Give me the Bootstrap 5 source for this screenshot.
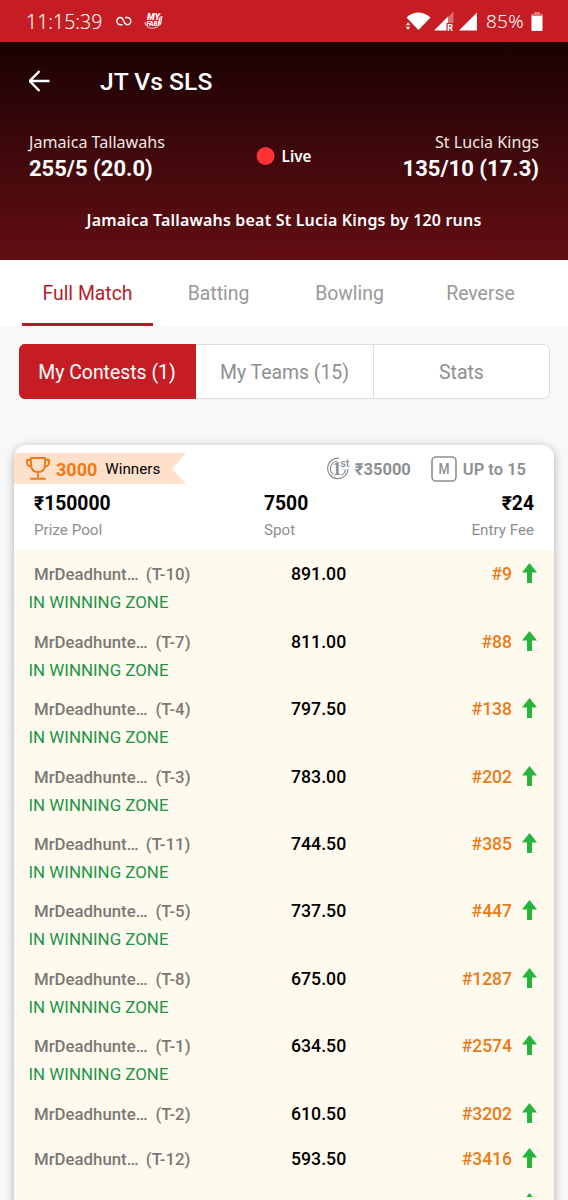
<!DOCTYPE html>
<html lang="en">
<head>
<meta charset="utf-8">
<meta name="viewport" content="width=device-width, initial-scale=1">
<title>JT Vs SLS</title>
<link href="https://cdn.jsdelivr.net/npm/bootstrap@5.3.0/dist/css/bootstrap.min.css" rel="stylesheet">
<style>
body{font-family:Roboto,"Liberation Sans",sans-serif;background:#f8f8f8;height:1200px;overflow:hidden;color:#000}
svg{display:block;flex:none}
.slate{font-family:"Noto Sans","Open Sans",sans-serif}
.statusbar{height:42px;background:#c61d25;padding:0 25px 0 26px}
.clock{font-size:19.500px;font-weight:350;width:78px;white-space:nowrap;padding-top:1px}
.pct{font-size:19px;font-weight:350;margin-left:9px;letter-spacing:.3px;padding-top:1px}
.hero{height:218px;background:linear-gradient(#1a0203,#630e13);color:#fff;padding:0 29px}
.titlebar{height:78px}
.titlebar h1{font-size:24.700px;font-weight:500;margin:0 0 0 49px;line-height:1;padding-top:3px}
.team{font-size:16.100px;line-height:22px;color:#f3e6e6}
.runs{font-size:22px;font-weight:700;line-height:31px}
.scores{height:76px;padding-top:11px}
.live{top:145px;font-size:15.200px}
.live-dot{width:18px;height:18px;background:#ff3236}
.result{font-size:16px;letter-spacing:.18px;font-weight:600;line-height:24px;padding-top:12px}
.match-tabs{height:66px;background:#fff;padding:0 22px}
.match-tabs .nav-link{width:131px;height:66px;border-radius:0;color:#999;font-size:19.400px;padding:0;line-height:67px}
.match-tabs .nav-link.active{color:#b51c29;box-shadow:inset 0 -3px #b51c29}
.segments{margin:18px 18px 0 19px;height:55px;border-radius:6px;background:#fff;overflow:hidden}
.segments button{width:178px;border:1px solid #ddd;border-left:0;background:none;color:#8c8f92;font-size:19.400px;padding:2px 0 0}
.segments button:last-child{width:176px;border-radius:0 6px 6px 0}
.segments .current{width:177px;background:#c61d25;color:#fff;border-color:#c61d25}
.contest{margin:46px 14px 0;height:760px;border:0;border-radius:12px 12px 0 0;background:#fff;box-shadow:0 2px 10px rgba(0,0,0,.3)}
.contest-top{padding-top:8px;height:39px}
.ribbon{width:172px;height:31px;background:#ffe0cb;clip-path:polygon(0 0,100% 0,92% 50%,100% 100%,0 100%);padding-left:12px;line-height:31px}
.won{color:#f4780f;font-size:18px;font-weight:700;margin-left:6px;padding-top:1px}
.winners{font-size:15.200px;margin-left:8px;padding-top:1px}
.perk{color:#8c8f92;font-weight:700;font-size:16.500px;margin-right:28px}
.perk span{padding-top:3px}
.perk .upto{font-weight:600}
.figures{height:66px;padding:0 20px}
.amount{font-size:19.300px;font-weight:700;line-height:24px;padding-top:7.500px}
.caption-text{font-size:15.200px;line-height:24px;color:#8c8f92;padding-top:2px}
.entries{background:#fffaee;height:647px;overflow:hidden}
.entry{height:67.4px;padding:11.400px 17px 0 14.500px}
.entry.short{height:45px}
.line{height:26px;line-height:26px}
.player{width:162px;padding-left:5.500px;color:#7b7874;font-size:16.800px;font-weight:500;white-space:nowrap}
.points{font-size:17.700px;font-weight:500;width:58px;margin-left:100.500px;white-space:nowrap}
.rank{font-size:17.500px;font-weight:500;color:#ea7a18;margin-left:auto;margin-right:10px}
.zone{font-size:16.900px;line-height:30px;color:#209447}
.entry svg{margin-top:-2px}
.tail{height:3px;background:#fffaee}
</style>
</head>
<body>
<header class="statusbar d-flex align-items-center text-white slate">
  <span class="clock">11:15:39</span>
  <svg style="margin-left:12px" width="16" height="12" viewBox="0 0 16 12" fill="none" stroke="#fff" stroke-width="1.4"><path d="M6.500 9.700H4.400a3.600 3.600 0 0 1 0-7.200C8.800 2.500 6.700 9.700 11.200 9.700a3.600 3.600 0 0 0 0-7.200H9"/></svg>
  <svg style="margin-left:12px" width="20" height="18" viewBox="0 0 20 18" fill="#fff" font-family="Roboto" font-style="italic" font-weight="900"><text x="3" y="8" font-size="9" textLength="13" lengthAdjust="spacingAndGlyphs">MY</text><text x="2.500" y="14.300" font-size="7" textLength="11" lengthAdjust="spacingAndGlyphs">FAB</text><path d="M15 6l-1.500 8h1.800L17 4zM17.500 4h1l-1.300 8-1.500 1.500z"/><path d="M1 10c0 6 8 8 13 4.500" fill="none" stroke="#fff" stroke-width=".8"/></svg>
  <div class="ms-auto d-flex align-items-center">
    <svg width="26" height="20" viewBox="0 0 26 20" fill="#fff"><path d="M1.500 6.500Q13-3.500 25.500 6.500L13.500 19Z"/><path d="M.5 14.300l2.500-3.300 2.500 3.300zM.5 15.700L3 19l2.500-3.300z" stroke="#c61d25" stroke-width=".4"/></svg>
    <svg style="margin-left:3px" width="20" height="20" viewBox="0 0 20 20"><path d="M14 6l5.500-5.500V12H14z" fill="#fff" opacity=".35"/><path d="M0 19.500L14 5.500V12h-1.500v7.500z" fill="#fff"/><text x="13.200" y="19.500" font-family="Roboto" font-weight="700" font-size="9" fill="#fff">R</text></svg>
    <svg style="margin-left:5px" width="18" height="19" viewBox="0 0 18 19" fill="#fff"><path d="M0 18.500L18 .5v18z"/></svg>
    <span class="pct">85%</span>
    <svg style="margin-left:7px" width="12" height="19" viewBox="0 0 12 19" fill="#fff"><path d="M3 0h6v2h3v2H0V2h3z" opacity=".4"/><path d="M.5 4h11v14a1 1 0 0 1-1 1h-9a1 1 0 0 1-1-1z"/></svg>
  </div>
</header>

<section class="hero">
  <div class="titlebar d-flex align-items-center">
    <svg width="22" height="22" viewBox="0 0 22 22" fill="none" stroke="#fff" stroke-width="2.400"><path d="M10.500 1L.8 11l9.700 10M.8 11H20.500"/></svg>
    <h1>JT Vs SLS</h1>
  </div>
  <div class="scores d-flex justify-content-between">
    <div><div class="team slate">Jamaica Tallawahs</div><div class="runs">255/5 (20.0)</div></div>
    <div class="text-end"><div class="team slate">St Lucia Kings</div><div class="runs">135/10 (17.3)</div></div>
    <div class="live position-absolute start-50 translate-middle-x d-flex align-items-center slate"><i class="live-dot rounded-circle"></i><span class="fw-semibold" style="margin-left:7px">Live</span></div>
  </div>
  <div class="result slate text-center">Jamaica Tallawahs beat St Lucia Kings by 120 runs</div>
</section>

<nav class="match-tabs nav flex-nowrap text-center">
  <a class="nav-link active" href="#">Full Match</a>
  <a class="nav-link" href="#">Batting</a>
  <a class="nav-link" href="#">Bowling</a>
  <a class="nav-link" href="#">Reverse</a>
</nav>

<div class="segments d-flex">
  <button class="current">My Contests (1)</button>
  <button>My Teams (15)</button>
  <button>Stats</button>
</div>

<main class="contest card">
  <div class="contest-top d-flex align-items-center">
    <div class="ribbon d-flex align-items-center">
      <svg width="24" height="23" viewBox="0 0 24 23" fill="none" stroke="#f07a1a" stroke-width="1.900" stroke-linecap="round" stroke-linejoin="round"><path d="M5 1h14v6.500c0 5-3 7.500-7 7.500s-7-2.500-7-7.500zM5 3H1v2.500C1 8 3 9.500 5.500 9.500M19 3h4v2.500C23 8 21 9.500 18.500 9.500M12 15v6.500M5 21.800h14"/></svg>
      <span class="won">3000</span><span class="winners">Winners</span>
    </div>
    <div class="perk d-flex align-items-center ms-auto">
      <svg width="23" height="23" viewBox="0 0 23 23" fill="none" stroke="#8c8f92" stroke-width="1.200"><path d="M12 1.300A10.200 10.200 0 1 0 21 12M10 4A7.800 7.800 0 0 0 6 17.500M14.500 18.300A7.800 7.800 0 0 0 18.500 12.500"/><text x="5.500" y="17.500" font-family="Liberation Serif" font-weight="700" font-size="18" fill="#8c8f92" stroke="none">1</text><text x="13.200" y="9.500" font-family="Roboto" font-weight="500" font-size="11" fill="#8c8f92" stroke="none">st</text></svg>
      <span class="first-prize" style="margin-left:5px">₹35000</span>
      <svg style="margin-left:20px" width="26" height="26" viewBox="0 0 26 26"><rect x="1" y="1" width="24" height="24" rx="4" fill="none" stroke="#8c8f92" stroke-width="1.600"/><text x="13" y="18.200" text-anchor="middle" font-family="Roboto" font-weight="500" font-size="14.500" textLength="11" lengthAdjust="spacingAndGlyphs" fill="#8c8f92">M</text></svg>
      <span class="upto" style="margin-left:6px">UP to 15</span>
    </div>
  </div>
  <div class="figures d-flex">
    <div style="width:230px"><div class="amount">₹150000</div><div class="caption-text">Prize Pool</div></div>
    <div><div class="amount">7500</div><div class="caption-text">Spot</div></div>
    <div class="ms-auto text-end"><div class="amount">₹24</div><div class="caption-text">Entry Fee</div></div>
  </div>
  <div class="entries" id="entries"></div>
  <div class="tail"></div>
</main>

<script src="https://cdn.jsdelivr.net/npm/bootstrap@5.3.0/dist/js/bootstrap.bundle.min.js"></script>
<script>
const rows = [
  ['MrDeadhunt…','T-10','891.00','#9',1],
  ['MrDeadhunte…','T-7','811.00','#88',1],
  ['MrDeadhunte…','T-4','797.50','#138',1],
  ['MrDeadhunte…','T-3','783.00','#202',1],
  ['MrDeadhunt…','T-11','744.50','#385',1],
  ['MrDeadhunte…','T-5','737.50','#447',1],
  ['MrDeadhunte…','T-8','675.00','#1287',1],
  ['MrDeadhunte…','T-1','634.50','#2574',1],
  ['MrDeadhunte…','T-2','610.50','#3202',0],
  ['MrDeadhunt…','T-12','593.50','#3416',0],
  ['MrDeadhunte…','T-6','','',0]
];
document.getElementById('entries').innerHTML = rows.map(([name, team, points, rank, zone]) => `
  <div class="entry${zone ? '' : ' short'}">
    <div class="line d-flex align-items-center">
      <div class="player d-flex justify-content-between"><span>${name}</span><span>(${team})</span></div>
      <div class="points">${points}</div>
      <div class="rank">${rank}</div>
      <svg width="15" height="20" viewBox="0 0 15 20" fill="#26b53a"><path d="M7.500 0L15 9.500H10V20H5V9.500H0z"/></svg>
    </div>
    ${zone ? '<div class="zone">IN WINNING ZONE</div>' : ''}
  </div>`).join('');
</script>
</body>
</html>
